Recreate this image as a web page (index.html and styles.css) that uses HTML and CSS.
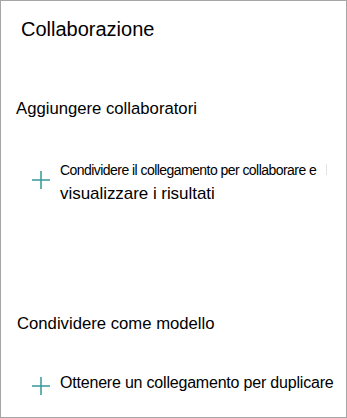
FILE: index.html
```html
<!DOCTYPE html>
<html lang="it">
<head>
    <meta charset="UTF-8">
    <meta name="viewport" content="width=device-width, initial-scale=1.0">
    <title>Collaborazione</title>
    <link rel="stylesheet" href="styles.css">
</head>
<body>
    <div class="panel">
        <h1>Collaborazione</h1>

        <h2 class="section first">Aggiungere collaboratori</h2>
        <div class="action first-action">
            <svg class="plus" viewBox="0 0 18 18" width="18" height="18">
                <path d="M9 0V18M0 9H18" stroke="#359999" stroke-width="1.5" fill="none"/>
            </svg>
            <div class="label">
                <span class="small">Condividere il collegamento per collaborare e<span class="caret"></span></span>
                <span class="large">visualizzare i risultati</span>
            </div>
        </div>

        <h2 class="section second">Condividere come modello</h2>
        <div class="action second-action">
            <svg class="plus" viewBox="0 0 18 18" width="18" height="18">
                <path d="M9 0V18M0 9H18" stroke="#359999" stroke-width="1.5" fill="none"/>
            </svg>
            <div class="label">
                <span class="single">Ottenere un collegamento per duplicare</span>
            </div>
        </div>
    </div>
</body>
</html>
```

FILE: styles.css
```css
body {
    margin: 0;
    padding: 0;
    font-family: "Liberation Sans", Arial, sans-serif;
    color: #000;
    background: #fff;
}
.panel {
    box-sizing: border-box;
    width: 347px;
    height: 418px;
    border: 1px solid #a6a6a6;
    display: flex;
    flex-direction: column;
    overflow: hidden;
}
h1 {
    margin: 16px 0 0 20px;
    font-size: 20px;
    font-weight: normal;
    line-height: 24px;
}
.section {
    margin: 0 0 0 15px;
    font-size: 16.7px;
    font-weight: normal;
    line-height: 20px;
}
.section.first {
    margin-top: 58px;
}
.section.second {
    margin-top: 105px;
    margin-left: 16px;
}
.action {
    display: flex;
    align-items: flex-start;
    margin-left: 31px;
    gap: 10px;
}
.first-action {
    margin-top: 42px;
}
.first-action .plus {
    margin-top: 10px;
}
.second-action {
    margin-top: 39px;
}
.second-action .plus {
    margin-top: 4px;
}
.plus {
    flex: none;
}
.label {
    display: flex;
    flex-direction: column;
}
.small {
    font-size: 14px;
    line-height: 18px;
    letter-spacing: -0.55px;
    white-space: nowrap;
}
.caret {
    display: inline-block;
    width: 1px;
    height: 11px;
    margin-left: 10px;
    background: #e4e4e4;
}
.large {
    font-size: 17px;
    line-height: 30px;
    letter-spacing: -0.05px;
}
.single {
    font-size: 16px;
    line-height: 20px;
    letter-spacing: -0.2px;
    white-space: nowrap;
}
```
